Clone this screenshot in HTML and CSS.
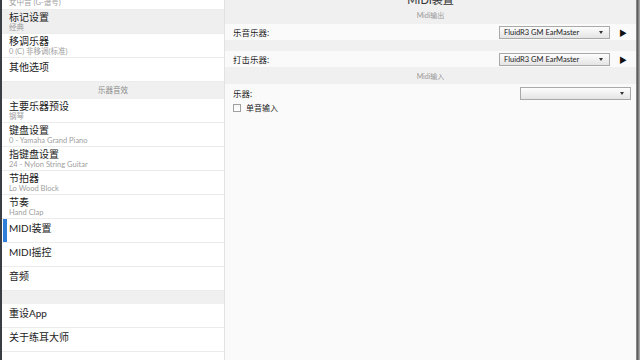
FILE: index.html
```html
<!DOCTYPE html>
<html lang="zh">
<head>
    <meta charset="UTF-8">
    <title>MIDI装置</title>
    <link rel="stylesheet" href="styles.css">
</head>
<body>
    <div class="window">
        <div class="frame-left"></div>

        <aside class="sidebar">
            <ul class="settings-list">
                <li class="item partial">
                    <div class="item-sub">女中音 (G-谱号)</div>
                </li>
                <li class="item pressed">
                    <div class="item-title">标记设置</div>
                    <div class="item-sub">经典</div>
                </li>
                <li class="item">
                    <div class="item-title">移调乐器</div>
                    <div class="item-sub">0 (C) 非移调(标准)</div>
                </li>
                <li class="item single">
                    <div class="item-title">其他选项</div>
                </li>
                <li class="group-header">乐器音效</li>
                <li class="item">
                    <div class="item-title">主要乐器预设</div>
                    <div class="item-sub">钢琴</div>
                </li>
                <li class="item">
                    <div class="item-title">键盘设置</div>
                    <div class="item-sub">0 - Yamaha Grand Piano</div>
                </li>
                <li class="item">
                    <div class="item-title">指键盘设置</div>
                    <div class="item-sub">24 - Nylon String Guitar</div>
                </li>
                <li class="item">
                    <div class="item-title">节拍器</div>
                    <div class="item-sub">Lo Wood Block</div>
                </li>
                <li class="item">
                    <div class="item-title">节奏</div>
                    <div class="item-sub">Hand Clap</div>
                </li>
                <li class="item single active">
                    <div class="item-title">MIDI装置</div>
                </li>
                <li class="item single">
                    <div class="item-title">MIDI摇控</div>
                </li>
                <li class="item single">
                    <div class="item-title">音频</div>
                </li>
                <li class="group-spacer"></li>
                <li class="item single">
                    <div class="item-title">重设App</div>
                </li>
                <li class="item single">
                    <div class="item-title">关于练耳大师</div>
                </li>
                <li class="item single"></li>
            </ul>
        </aside>

        <main class="content">
            <h1 class="page-title">MIDI装置</h1>

            <div class="section-label">Midi输出</div>
            <div class="form-row">
                <span class="row-label">乐音乐器:</span>
                <div class="select">FluidR3 GM EarMaster<span class="caret"></span></div>
                <span class="play">&#9654;</span>
            </div>
            <div class="row-gap"></div>
            <div class="form-row">
                <span class="row-label">打击乐器:</span>
                <div class="select">FluidR3 GM EarMaster<span class="caret"></span></div>
                <span class="play">&#9654;</span>
            </div>

            <div class="section-label input-label">Midi输入</div>
            <div class="input-body">
                <div class="input-row">
                    <span class="row-label">乐器:</span>
                    <div class="select"><span class="caret"></span></div>
                </div>
                <label class="check-row">
                    <span class="checkbox"></span>
                    <span>单音输入</span>
                </label>
            </div>
        </main>

        <div class="frame-right"></div>
    </div>
</body>
</html>
```

FILE: styles.css
```css
:root {
    --panel-gray: #f0f0f0;
    --row-bg: #fafafa;
    --line: #ececec;
    --text-main: #222;
    --text-soft: #a0a0a0;
    --accent: #2f7fd8;
}

* {
    margin: 0;
    padding: 0;
    box-sizing: border-box;
}

body {
    width: 640px;
    height: 360px;
    overflow: hidden;
    font-family: Lato, "Noto Sans CJK SC", sans-serif;
    color: var(--text-main);
    background: #fff;
}

.window {
    display: flex;
    height: 360px;
}

.frame-left {
    width: 2px;
    background: #3a3d42;
}

.frame-right {
    width: 4px;
    background: linear-gradient(90deg, #9a9a9a, #5a5a5a 40%, #8c8c8c 70%, #b5b5b5);
}

/* left list */
.sidebar {
    width: 222px;
    overflow: hidden;
    background: #fff;
}

.settings-list {
    list-style: none;
}

.item {
    position: relative;
    height: 24px;
    padding: 1px 0 0 7px;
    border-bottom: 1px solid var(--line);
}

/* scrolled row, only its second line shows */
.item.partial {
    height: 10px;
    padding-top: 0;
    overflow: hidden;
}

.item.partial .item-sub {
    margin-top: -2px;
}

.item.single {
    padding-top: 3px;
}

.item.pressed {
    background: #efefef;
}

.item.active::before {
    content: "";
    position: absolute;
    left: 1px;
    top: 0;
    bottom: 0;
    width: 4px;
    background: var(--accent);
}

.item-title {
    font-size: 10px;
    line-height: 12px;
    color: var(--text-main);
}

.item-sub {
    font-size: 7.5px;
    line-height: 9.5px;
    color: var(--text-soft);
}

.group-header {
    height: 17px;
    line-height: 18px;
    background: var(--panel-gray);
    text-align: center;
    font-size: 7.5px;
    color: #8a8a8a;
}

.group-spacer {
    height: 13px;
    background: var(--panel-gray);
}

/* right panel */
.content {
    flex: 1;
    background: var(--panel-gray);
    border-left: 1px solid #e2e2e2;
    display: flex;
    flex-direction: column;
}

.page-title {
    margin-top: -7px;
    height: 14px;
    line-height: 14px;
    text-align: center;
    font-size: 11px;
    font-weight: 400;
    color: #333;
}

.section-label {
    height: 17px;
    line-height: 16px;
    text-align: center;
    font-size: 7px;
    color: #999;
}

.input-label {
    line-height: 18px;
}

.form-row {
    height: 16px;
    display: flex;
    align-items: center;
    padding: 0 6px 0 8px;
    background: var(--row-bg);
}

.row-gap {
    height: 11px;
}

.row-label {
    flex: 1;
    font-size: 8.5px;
}

.select {
    position: relative;
    width: 111px;
    height: 13px;
    line-height: 11px;
    padding-left: 4px;
    font-size: 7.5px;
    border: 1px solid #a9a9a9;
    background: linear-gradient(#fdfdfd, #e4e4e4);
    color: #222;
}

.caret {
    position: absolute;
    right: 6px;
    top: 4px;
    border-left: 2px solid transparent;
    border-right: 2px solid transparent;
    border-top: 3px solid #333;
}

.play {
    width: 14px;
    margin-left: 6px;
    text-align: center;
    font-size: 8px;
    color: #111;
}

.input-body {
    flex: 1;
    background: var(--row-bg);
    padding: 2px 5px 0 8px;
}

.input-row {
    display: flex;
    align-items: center;
    height: 14px;
}

.check-row {
    display: flex;
    align-items: center;
    gap: 5px;
    margin-top: 2px;
    font-size: 8px;
}

.checkbox {
    width: 8px;
    height: 8px;
    border: 1px solid #a0a0a0;
    background: linear-gradient(#f4f4f4, #fff);
}
```
